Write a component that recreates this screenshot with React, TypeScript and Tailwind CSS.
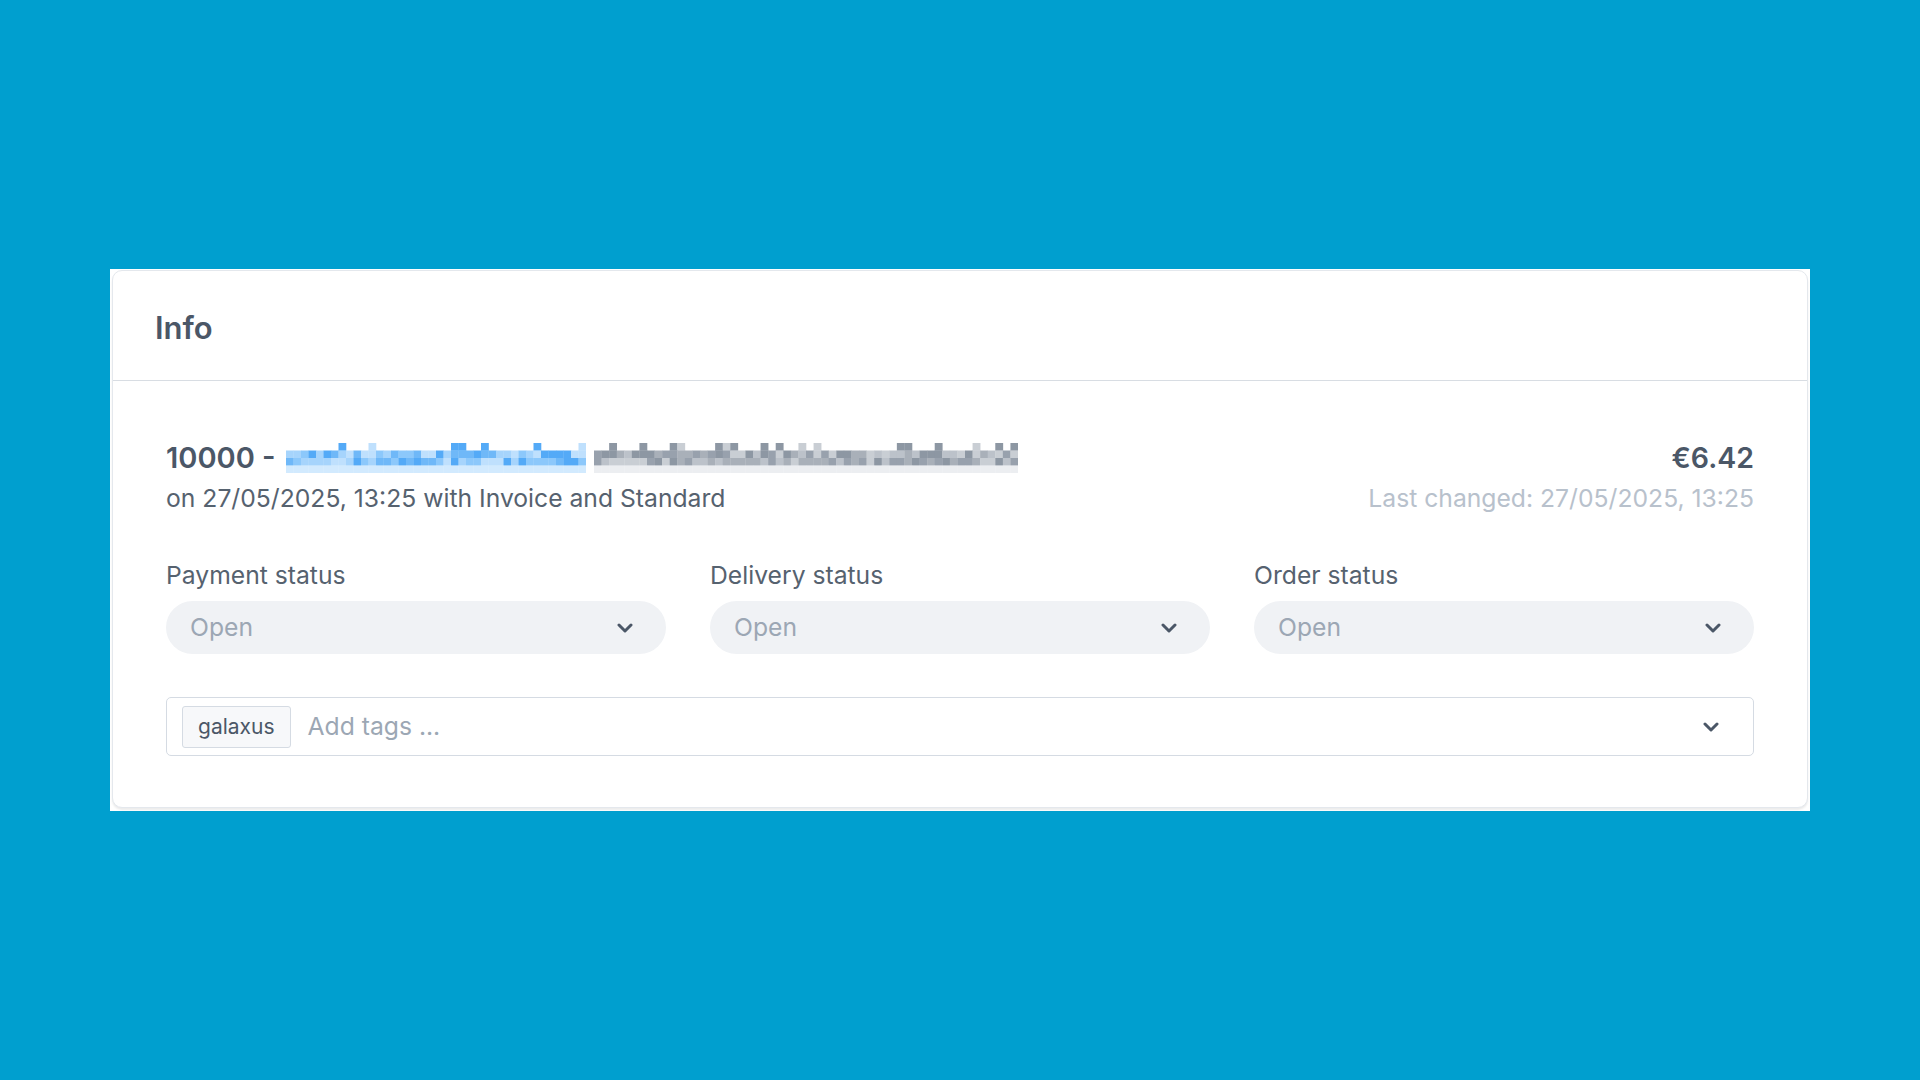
import React from 'react';

// Pixelated (censored) blocks for customer name and e-mail
const mosaic = (cols: number, rows: number, palette: string[], seed: number) => {
  const cells: { x: number; y: number; c: string }[] = [];
  let s = seed;
  const rnd = () => {
    s = (s * 9301 + 49297) % 233280;
    return s / 233280;
  };
  for (let y = 0; y < rows; y++) {
    for (let x = 0; x < cols; x++) {
      const r = rnd();
      if (y === 0 && r < 0.7) continue;
      if (y === rows - 1) {
        cells.push({ x, y, c: palette[palette.length - 1] });
        continue;
      }
      cells.push({ x, y, c: palette[Math.floor(r * (palette.length - 1))] });
    }
  }
  return cells;
};

const nameCells = mosaic(40, 4, ['#8cc8fb', '#a6d4fc', '#6fb8f8', '#bfe0fd', '#54aaf7', '#d2eafe'], 7);
const mailCells = mosaic(56, 4, ['#a9b0b9', '#bcc2ca', '#98a1ad', '#c9ced4', '#8d97a3', '#eceef1'], 3);

const Mosaic: React.FC<{ cells: { x: number; y: number; c: string }[]; cols: number; w: number }> = ({ cells, cols, w }) => {
  const bw = w / cols;
  return (
    <svg width={w} height={30} className="block">
      {cells.map((cell, i) => (
        <rect key={i} x={cell.x * bw} y={cell.y * 7.5} width={bw + 0.3} height={7.8} fill={cell.c} />
      ))}
    </svg>
  );
};

const Chevron: React.FC = () => (
  <svg width="16" height="10" viewBox="0 0 16 10" fill="none">
    <polyline points="2,2 8,8 14,2" stroke="#4b5767" strokeWidth="3" strokeLinecap="round" strokeLinejoin="round" />
  </svg>
);

const StatusSelect: React.FC<{ label: string }> = ({ label }) => (
  <div className="flex flex-col">
    <span className="text-[24.7px] leading-[32px] text-[#56626f] mb-[10px]">{label}</span>
    <div className="h-[53px] rounded-full bg-[#f0f2f5] flex items-center justify-between pl-[24px] pr-[33px]">
      <span className="text-[24.7px] text-[#9ca7b4]">Open</span>
      <Chevron />
    </div>
  </div>
);

export default function App() {
  return (
    <div
      className="w-[1920px] h-[1080px] bg-[#009fcf] flex items-center justify-center"
      style={{ fontFamily: 'Inter, "Noto Sans", sans-serif' }}
    >
      <div className="w-[1700px] bg-white pt-px px-[2px] pb-[3px]">
        <div className="rounded-[10px] border border-[#e4e8ed] shadow-[0_2px_2px_rgba(0,0,0,0.08)] bg-white">
          {/* Header */}
          <div className="h-[110px] flex items-center pt-[6px] px-[42px] border-b border-[#d8dde3]">
            <h2 className="text-[31px] font-semibold text-[#4b5767]">Info</h2>
          </div>

          {/* Body */}
          <div className="px-[53px] pt-[57px] pb-[51px]">
            <div className="flex justify-between items-start">
              <div>
                <div className="flex items-center h-[40px] text-[29px] font-semibold text-[#4b5767]">
                  <span>10000 -</span>
                  <span className="ml-[10px]">
                    <Mosaic cells={nameCells} cols={40} w={300} />
                  </span>
                  <span className="ml-[8px]">
                    <Mosaic cells={mailCells} cols={56} w={424} />
                  </span>
                </div>
                <div className="text-[24.7px] leading-[40px] text-[#56626f]">
                  on 27/05/2025, 13:25 with Invoice and Standard
                </div>
              </div>
              <div className="text-right">
                <div className="h-[40px] flex items-center justify-end text-[28.5px] font-semibold text-[#4b5767]">€6.42</div>
                <div className="text-[24.7px] leading-[40px] text-[#b8c1cc]">Last changed: 27/05/2025, 13:25</div>
              </div>
            </div>

            <div className="grid grid-cols-3 gap-[44px] mt-[41px]">
              <StatusSelect label="Payment status" />
              <StatusSelect label="Delivery status" />
              <StatusSelect label="Order status" />
            </div>

            <div className="mt-[43px] h-[59px] rounded-[5px] border border-[#d5dbe3] flex items-center pl-[15px] pr-[34px]">
              <span className="h-[42px] px-[15px] flex items-center rounded-[3px] border border-[#d5dbe3] bg-[#f7f8fa] text-[21px] text-[#4b5767]">
                galaxus
              </span>
              <span className="ml-[17px] text-[24.7px] text-[#9ca7b4] flex-1">Add tags ...</span>
              <Chevron />
            </div>
          </div>
        </div>
      </div>
    </div>
  );
}
